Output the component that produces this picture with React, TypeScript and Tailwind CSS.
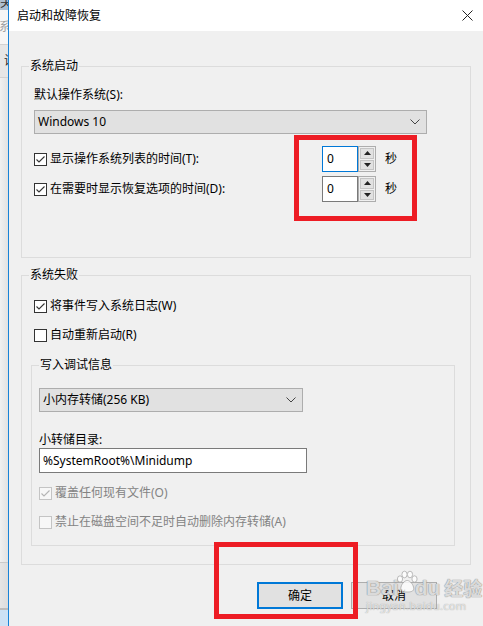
import React from "react";

const font = "font-['Noto_Sans','Noto_Sans_CJK_SC',sans-serif]";

const Check = ({ checked, disabled, label }: { checked?: boolean; disabled?: boolean; label: string }) => (
  <div className="flex items-center h-4 gap-[3px]">
    <span
      className={`w-[13px] h-[13px] border flex items-center justify-center ${
        disabled ? "border-[#c4c4c4] bg-[#f7f7f7]" : "border-[#333] bg-white"
      }`}
    >
      {checked && (
        <svg width="11" height="11" viewBox="0 0 11 11">
          <polyline
            points="1.5,5.5 4,8 9.5,2.5"
            fill="none"
            stroke={disabled ? "#b4b4b4" : "#333"}
            strokeWidth="1.1"
          />
        </svg>
      )}
    </span>
    <span className={`text-[12px] leading-4 ${disabled ? "text-[#838383]" : "text-black"}`}>{label}</span>
  </div>
);

const Chevron = () => (
  <svg width="10" height="6" viewBox="0 0 10 6">
    <polyline points="0.5,0.5 5,5 9.5,0.5" fill="none" stroke="#444" strokeWidth="1" />
  </svg>
);

const Select = ({ value, width }: { value: string; width: string }) => (
  <div className={`${width} h-[24px] bg-[#e1e1e1] border border-[#adadad] flex items-center justify-between pl-[3px] pr-[6px]`}>
    <span className="text-[12px] leading-4">{value}</span>
    <Chevron />
  </div>
);

const Tri = ({ up }: { up?: boolean }) => (
  <svg width="7" height="4" viewBox="0 0 7 4">
    <polygon points={up ? "0,4 3.5,0 7,4" : "0,0 7,0 3.5,4"} fill="#222" />
  </svg>
);

const Spinner = ({ focused }: { focused?: boolean }) => (
  <div className="flex items-center">
    <div className="flex h-[26px]">
      <div
        className={`w-[36px] h-full bg-white border pl-[4px] flex items-center text-[12px] ${
          focused ? "border-[#0078d7]" : "border-[#7a7a7a]"
        }`}
      >
        0
      </div>
      <div className="w-[18px] h-full border border-[#adadad] bg-[#f0f0f0] flex flex-col p-px gap-px">
        <div className="flex-1 bg-[#e1e1e1] border border-[#c4c4c4] flex items-center justify-center">
          <Tri up />
        </div>
        <div className="flex-1 bg-[#e1e1e1] border border-[#c4c4c4] flex items-center justify-center">
          <Tri />
        </div>
      </div>
    </div>
    <span className="ml-[9px] text-[12px] leading-4">秒</span>
  </div>
);

const Paw = () => (
  <svg width="24" height="24" viewBox="0 0 24 24" className="opacity-80">
    <g fill="#fff" stroke="#9a9a9a" strokeWidth="0.8">
      <ellipse cx="5" cy="9" rx="2.6" ry="3.2" />
      <ellipse cx="9.5" cy="4.5" rx="2.6" ry="3.3" />
      <ellipse cx="15" cy="4.5" rx="2.6" ry="3.3" />
      <ellipse cx="19.5" cy="9" rx="2.6" ry="3.2" />
      <path d="M12.2 10.5c3 0 6.5 4.5 6.5 8 0 3-3 3.5-6.5 3.5S5.8 21.5 5.8 18.5c0-3.5 3.4-8 6.4-8z" />
    </g>
  </svg>
);

const BehindWindow = () => (
  <div className="w-[8px] h-full flex flex-col overflow-hidden shrink-0">
    <div className="h-[10px] bg-[#aebfd0] overflow-hidden">
      <span className="block -mt-[5px] text-[12px] leading-4 text-[#333]">关</span>
    </div>
    <div className="h-[34px] bg-[#f6f6f6] flex items-center">
      <span className="text-[12px] leading-4 text-[#a0a0a0] -ml-[1px]">系</span>
    </div>
    <div className="h-[34px] bg-[#e6e6e6] border-y border-[#d2d2d2] flex items-center">
      <span className="text-[12px] leading-4 text-[#222] ml-[4px]">设</span>
    </div>
    <div className="flex-1 bg-gradient-to-r from-[#f1f1f1] to-[#e2e2e2]" />
    <div className="h-[46px] bg-gradient-to-r from-[#e6e6e6] to-[#dcdcdc] border-t border-[#cacaca]" />
    <div className="h-[18px] bg-[#cde2f5] border-t-2 border-[#bcbcbc]" />
  </div>
);

export default function App() {
  return (
    <div className={`relative w-[483px] h-[626px] overflow-hidden flex ${font} text-black`}>
      <BehindWindow />
      <div className="flex-1 flex flex-col border-l border-[#1883d7] bg-[#f0f0f0]">
        <div className="h-[31px] bg-white flex items-center justify-between pl-[8px] pr-[10px]">
          <span className="text-[12px] leading-4">启动和故障恢复</span>
          <svg width="11" height="11" viewBox="0 0 11 11">
            <path d="M0.5 0.5L10.5 10.5M10.5 0.5L0.5 10.5" stroke="#222" strokeWidth="1" />
          </svg>
        </div>

        <div className="flex flex-col pl-[12px] pt-[27px]">
          <fieldset className="w-[450px] border border-[#dcdcdc]">
            <legend className="ml-[7px] px-[1px] text-[12px] leading-4">系统启动</legend>
            <div className="flex flex-col pl-[12px] pt-[13px] pb-[55px]">
              <span className="text-[12px] leading-4">默认操作系统(S):</span>
              <div className="mt-[7px]">
                <Select value="Windows 10" width="w-[393px]" />
              </div>
              <div className="mt-[12px] h-[26px] flex items-center">
                <div className="w-[288px]">
                  <Check checked label="显示操作系统列表的时间(T):" />
                </div>
                <Spinner focused />
              </div>
              <div className="mt-[4px] h-[26px] flex items-center">
                <div className="w-[288px]">
                  <Check checked label="在需要时显示恢复选项的时间(D):" />
                </div>
                <Spinner />
              </div>
            </div>
          </fieldset>

          <fieldset className="mt-[9px] w-[450px] border border-[#dcdcdc]">
            <legend className="ml-[7px] px-[1px] text-[12px] leading-4">系统失败</legend>
            <div className="flex flex-col pt-[15px] pb-[18px]">
              <div className="pl-[12px] flex flex-col gap-[13px]">
                <Check checked label="将事件写入系统日志(W)" />
                <Check label="自动重新启动(R)" />
              </div>
              <fieldset className="mt-[14px] ml-[9px] w-[424px] border border-[#dcdcdc]">
                <legend className="ml-[7px] px-[1px] text-[12px] leading-4">写入调试信息</legend>
                <div className="flex flex-col pl-[7px] pt-[15px] pb-[15px]">
                  <Select value="小内存转储(256 KB)" width="w-[264px]" />
                  <span className="mt-[20px] text-[12px] leading-4">小转储目录:</span>
                  <div className="w-[268px] h-[25px] bg-white border border-[#7a7a7a] flex items-center pl-[3px] text-[12px]">
                    %SystemRoot%\Minidump
                  </div>
                  <div className="mt-[12px]">
                    <Check checked disabled label="覆盖任何现有文件(O)" />
                  </div>
                  <div className="mt-[13px]">
                    <Check disabled label="禁止在磁盘空间不足时自动删除内存转储(A)" />
                  </div>
                </div>
              </fieldset>
            </div>
          </fieldset>
        </div>

        <div className="mt-[17px] flex justify-end gap-[8px] pr-[46px]">
          <button className="w-[86px] h-[27px] bg-[#e1e1e1] border-2 border-[#0078d7] text-[12px] leading-4">
            确定
          </button>
          <button className="w-[86px] h-[27px] bg-[#e1e1e1] border border-[#adadad] text-[12px] leading-4">
            取消
          </button>
        </div>
      </div>

      <div className="absolute left-[294px] top-[135px] w-[123px] h-[86px] border-[5px] border-[#ed1c24]" />
      <div className="absolute left-[214px] top-[542px] w-[144px] h-[77px] border-[5px] border-[#ed1c24]" />

      <div className="absolute left-[366px] top-[576px] flex flex-col pointer-events-none">
        <div className="flex items-end font-['Liberation_Sans',sans-serif] font-bold text-[21px] leading-[24px] text-white/70 [text-shadow:0_0_1px_#8a8a8a,0_0_1px_#8a8a8a]">
          <span>Bai</span>
          <span className="-mx-[4px] -mt-[6px] self-start">
            <Paw />
          </span>
          <span>du</span>
          <span className="ml-[4px] text-[19px] font-['Noto_Sans_CJK_SC',sans-serif]">经验</span>
        </div>
        <span className="text-[11px] leading-[12px] tracking-[0.3px] text-white/70 [text-shadow:0_0_1px_#8a8a8a]">
          jingyan.baidu.com
        </span>
      </div>
    </div>
  );
}
